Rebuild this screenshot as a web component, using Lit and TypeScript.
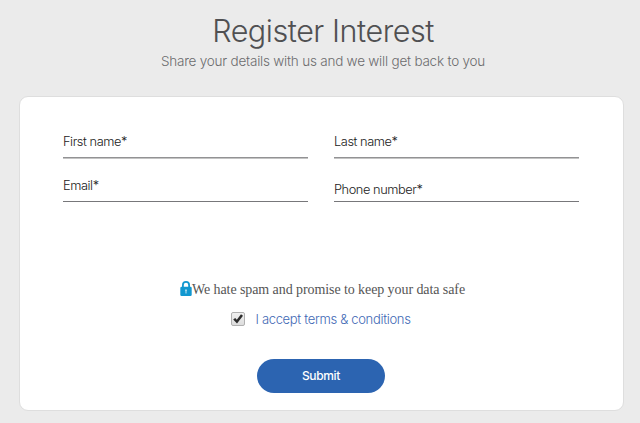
import { LitElement, html, css } from "lit";
import { customElement, property } from "lit/decorators.js";

@customElement("form-field")
export class FormField extends LitElement {
  @property() label = "";
  @property({ type: Boolean, reflect: true }) soft = false;
  @property({ type: Boolean, reflect: true }) low = false;

  static styles = css`
    :host {
      display: flex;
      align-items: flex-start;
      box-sizing: border-box;
      height: 26px;
      padding-top: 1px;
      border-bottom: 1px solid #77777a;
      font: 300 12.8px/18px Inter, "Liberation Sans", sans-serif;
      letter-spacing: -0.43px;
      color: #222;
    }
    :host([soft]) {
      border-bottom-color: #929294;
      box-shadow: 0 1px 0 #c4c4c4;
    }
    :host([low]) {
      padding-top: 5px;
    }
  `;

  render() {
    return html`<label>${this.label}</label>`;
  }
}

@customElement("app-root")
export class AppRoot extends LitElement {
  static styles = css`
    :host {
      display: flex;
      flex-direction: column;
      align-items: center;
      box-sizing: border-box;
      width: 640px;
      height: 423px;
      overflow: hidden;
      background: #ebebeb;
      font-family: Inter, "Liberation Sans", sans-serif;
      font-weight: 300;
    }
    h1 {
      margin: 11px 0 0;
      padding-left: 6px;
      font-size: 30.5px;
      font-weight: 270;
      line-height: 40px;
      letter-spacing: -0.45px;
      color: #505052;
      white-space: nowrap;
    }
    .subtitle {
      margin: 0;
      padding-left: 6px;
      font-size: 13.5px;
      line-height: 20px;
      letter-spacing: -0.22px;
      color: #6c6c6e;
      white-space: nowrap;
    }
    .card {
      display: flex;
      flex-direction: column;
      align-items: center;
      align-self: flex-start;
      box-sizing: border-box;
      width: 605px;
      height: 315px;
      margin: 25px 0 0 19px;
      padding: 35px 44px 0 43px;
      background: #fff;
      border: 1px solid #dedede;
      border-radius: 9px;
    }
    .fields {
      display: grid;
      grid-template-columns: 245px 245px;
      gap: 18px 26px;
      align-self: flex-start;
    }
    .promise {
      display: flex;
      align-items: center;
      height: 20px;
      margin: 78px 0 0 3px;
      font: 400 14px/20px "Liberation Serif", serif;
      letter-spacing: -0.08px;
      color: #555;
      white-space: nowrap;
    }
    .lock {
      width: 12px;
      height: 16px;
      margin-bottom: 2px;
    }
    .terms {
      display: flex;
      align-items: center;
      gap: 10px;
      height: 20px;
      margin-top: 9px;
      font-size: 13px;
      letter-spacing: -0.32px;
      color: #3f69b5;
      white-space: nowrap;
    }
    .box {
      width: 14px;
      height: 14px;
    }
    .submit {
      width: 128px;
      height: 34px;
      margin: 30px 0 0;
      padding: 0;
      border: 0;
      border-radius: 17px;
      background: #2c64b1;
      color: #fff;
      font: 500 12px/34px Inter, "Liberation Sans", sans-serif;
      letter-spacing: -0.35px;
    }
  `;

  render() {
    return html`
      <h1>Register Interest</h1>
      <p class="subtitle">Share your details with us and we will get back to you</p>
      <form class="card">
        <div class="fields">
          <form-field label="First name*" soft></form-field>
          <form-field label="Last name*" soft></form-field>
          <form-field label="Email*"></form-field>
          <form-field label="Phone number*" low></form-field>
        </div>
        <p class="promise">
          <svg class="lock" viewBox="0 0 12 16">
            <path d="M2.9 7V4a3.1 3.1 0 0 1 6.2 0V7" fill="none" stroke="#1298d0" stroke-width="1.8" />
            <rect x="0.3" y="5.7" width="11.4" height="9.3" rx="1.2" fill="#1298d0" />
            <path d="M6 8.3a1.1 1.1 0 0 1 .6 2v2.2H5.4v-2.2a1.1 1.1 0 0 1 .6-2z" fill="#a5d8ec" />
          </svg>
          <span>We hate spam and promise to keep your data safe</span>
        </p>
        <div class="terms">
          <svg class="box" viewBox="0 0 14 14">
            <defs>
              <linearGradient id="face" x1="0" y1="0" x2="0" y2="1">
                <stop offset="0" stop-color="#f1f1f1" />
                <stop offset="1" stop-color="#dcdcdc" />
              </linearGradient>
            </defs>
            <rect x="0.5" y="0.5" width="13" height="13" rx="1.5" fill="url(#face)" stroke="#b0b0b0" />
            <path d="M2.2 7.6L4.2 6l1.6 1.8L10 2.3l2 1.5L6 11.6z" fill="#2d2d2d" />
          </svg>
          <span>I accept terms &amp; conditions</span>
        </div>
        <button class="submit" type="button">Submit</button>
      </form>
    `;
  }
}
